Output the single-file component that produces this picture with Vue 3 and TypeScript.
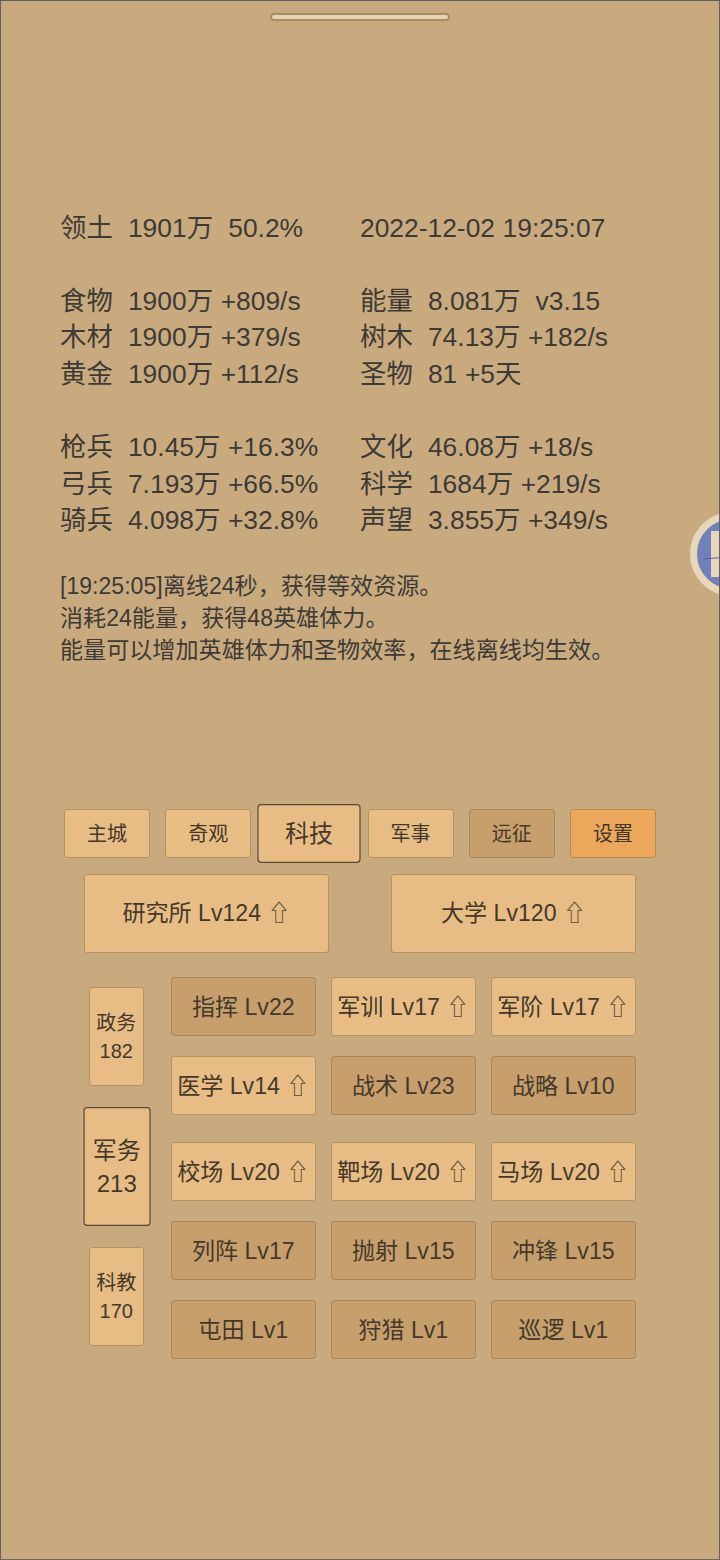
<script setup lang="ts">
interface Btn { t: string; up?: boolean; dark?: boolean }
const statGroups: [string, string][][] = [
  [['领土  1901万  50.2%', '2022-12-02 19:25:07']],
  [
    ['食物  1900万 +809/s', '能量  8.081万  v3.15'],
    ['木材  1900万 +379/s', '树木  74.13万 +182/s'],
    ['黄金  1900万 +112/s', '圣物  81 +5天'],
  ],
  [
    ['枪兵  10.45万 +16.3%', '文化  46.08万 +18/s'],
    ['弓兵  7.193万 +66.5%', '科学  1684万 +219/s'],
    ['骑兵  4.098万 +32.8%', '声望  3.855万 +349/s'],
  ],
]
const logs = ['[19:25:05]离线24秒，获得等效资源。', '消耗24能量，获得48英雄体力。', '能量可以增加英雄体力和圣物效率，在线离线均生效。']
const tabs = [
  { t: '主城', c: '' }, { t: '奇观', c: '' }, { t: '科技', c: 'active' },
  { t: '军事', c: '' }, { t: '远征', c: 'dark' }, { t: '设置', c: 'orange' },
]
const sides = [{ a: '政务', b: '182', on: false }, { a: '军务', b: '213', on: true }, { a: '科教', b: '170', on: false }]
const groups: Btn[][][] = [
  [
    [{ t: '指挥 Lv22', dark: true }, { t: '军训 Lv17', up: true }, { t: '军阶 Lv17', up: true }],
    [{ t: '医学 Lv14', up: true }, { t: '战术 Lv23', dark: true }, { t: '战略 Lv10', dark: true }],
  ],
  [
    [{ t: '校场 Lv20', up: true }, { t: '靶场 Lv20', up: true }, { t: '马场 Lv20', up: true }],
    [{ t: '列阵 Lv17', dark: true }, { t: '抛射 Lv15', dark: true }, { t: '冲锋 Lv15', dark: true }],
    [{ t: '屯田 Lv1', dark: true }, { t: '狩猎 Lv1', dark: true }, { t: '巡逻 Lv1', dark: true }],
  ],
]
</script>

<template>
  <div class="page">
    <div class="handle"></div>
    <div class="stats">
      <div v-for="(g, i) in statGroups" :key="i" class="stat-group">
        <div v-for="(r, j) in g" :key="j" class="stat-row">
          <span class="cell">{{ r[0] }}</span>
          <span class="cell">{{ r[1] }}</span>
        </div>
      </div>
    </div>
    <div class="log">
      <div v-for="l in logs" :key="l">{{ l }}</div>
    </div>
    <div class="tabs">
      <div v-for="t in tabs" :key="t.t" class="btn tab" :class="t.c">{{ t.t }}</div>
    </div>
    <div class="majors">
      <div class="btn major">研究所 Lv124 <span class="up">⇧</span></div>
      <div class="btn major">大学 Lv120 <span class="up">⇧</span></div>
    </div>
    <div class="panel">
      <div class="sides">
        <div v-for="s in sides" :key="s.a" class="btn side" :class="{ active: s.on }">
          <div>{{ s.a }}</div>
          <div>{{ s.b }}</div>
        </div>
      </div>
      <div class="groups">
        <div v-for="(g, i) in groups" :key="i" class="group">
          <div v-for="(r, j) in g" :key="j" class="row">
            <div v-for="b in r" :key="b.t" class="btn item" :class="{ dark: b.dark }">
              {{ b.t }}<span v-if="b.up" class="up"> ⇧</span>
            </div>
          </div>
        </div>
      </div>
    </div>
    <div class="float">
      <div class="float-mark"></div>
      <div class="float-line"></div>
    </div>
  </div>
</template>

<style>
html, body { margin: 0; padding: 0; background: #c8a97e; }
</style>

<style scoped>
.page {
  position: relative;
  width: 720px;
  height: 1560px;
  box-sizing: border-box;
  overflow: hidden;
  background: #c9aa7f;
  border: 1px solid #5f6068;
  border-bottom-color: #6d6a5e;
  color: #3d3a36;
  font-family: "Liberation Sans", "Noto Sans CJK SC", sans-serif;
  display: flex;
  flex-direction: column;
}
.handle {
  width: 176px;
  height: 4px;
  margin: 12px auto 0;
  background: #e4d4b8;
  border: 2px solid #a58c66;
  border-radius: 4px;
}
.stats {
  margin-top: 188.7px;
  padding-left: 59px;
  font-size: 26.4px;
  line-height: 36.6px;
}
.stat-group { margin-bottom: 36.6px; }
.stat-row { display: flex; }
.cell { white-space: pre; word-spacing: 0.25px; }
.cell:first-child { width: 300px; }
.log {
  padding-left: 59px;
  margin-top: -5.7px;
  font-size: 23.1px;
  line-height: 32px;
}
.btn {
  box-sizing: border-box;
  display: flex;
  align-items: center;
  justify-content: center;
  background: #e7bd85;
  border: 1px solid #b5935f;
  border-radius: 3px;
  color: #45382a;
  white-space: pre;
}
.btn.dark { background: #c69f6d; border-color: #a9865a; }
.btn.orange { background: #eba75c; border-color: #b88a50; }
.btn.active { transform: scale(1.2); border-color: #5a4a34; }
.tabs {
  margin-top: 143px;
  padding-left: 63px;
  display: flex;
  gap: 15.2px;
}
.tab { width: 86px; height: 49px; font-size: 20px; padding-bottom: 1px; }
.tab.active { padding-bottom: 3px; }
.majors {
  margin-top: 16px;
  padding-left: 83px;
  display: flex;
  gap: 62px;
}
.major { width: 245px; height: 79px; font-size: 23.1px; padding-bottom: 4px; }
.panel {
  margin-top: 24px;
  display: flex;
}
.sides {
  width: 169.5px;
  padding-left: 87.5px;
  padding-top: 10px;
  box-sizing: border-box;
  display: flex;
  flex-direction: column;
  gap: 31px;
}
.side {
  width: 55.5px;
  height: 99px;
  font-size: 20px;
  line-height: 28px;
  flex-direction: column;
  padding-top: 1px;
}
.groups { display: flex; flex-direction: column; gap: 27px; }
.group { display: flex; flex-direction: column; gap: 20px; }
.row { display: flex; gap: 14.5px; }
.item { width: 145.5px; height: 59px; font-size: 23.1px; padding-bottom: 2px; }
.up { color: #5b4a34; }
.float {
  position: absolute;
  left: 689px;
  top: 511px;
  width: 84px;
  height: 84px;
  box-sizing: border-box;
  border: 7px solid #e7d6b9;
  border-radius: 50%;
  background: #7180b8;
}
.float-mark {
  position: absolute;
  left: 14px;
  top: 12px;
  width: 30px;
  height: 46px;
  background: #e7d6b9;
}
.float-line {
  position: absolute;
  left: 6px;
  top: 38px;
  width: 40px;
  height: 1px;
  background: #5e6a9c;
  transform: rotate(-4deg);
}
</style>
